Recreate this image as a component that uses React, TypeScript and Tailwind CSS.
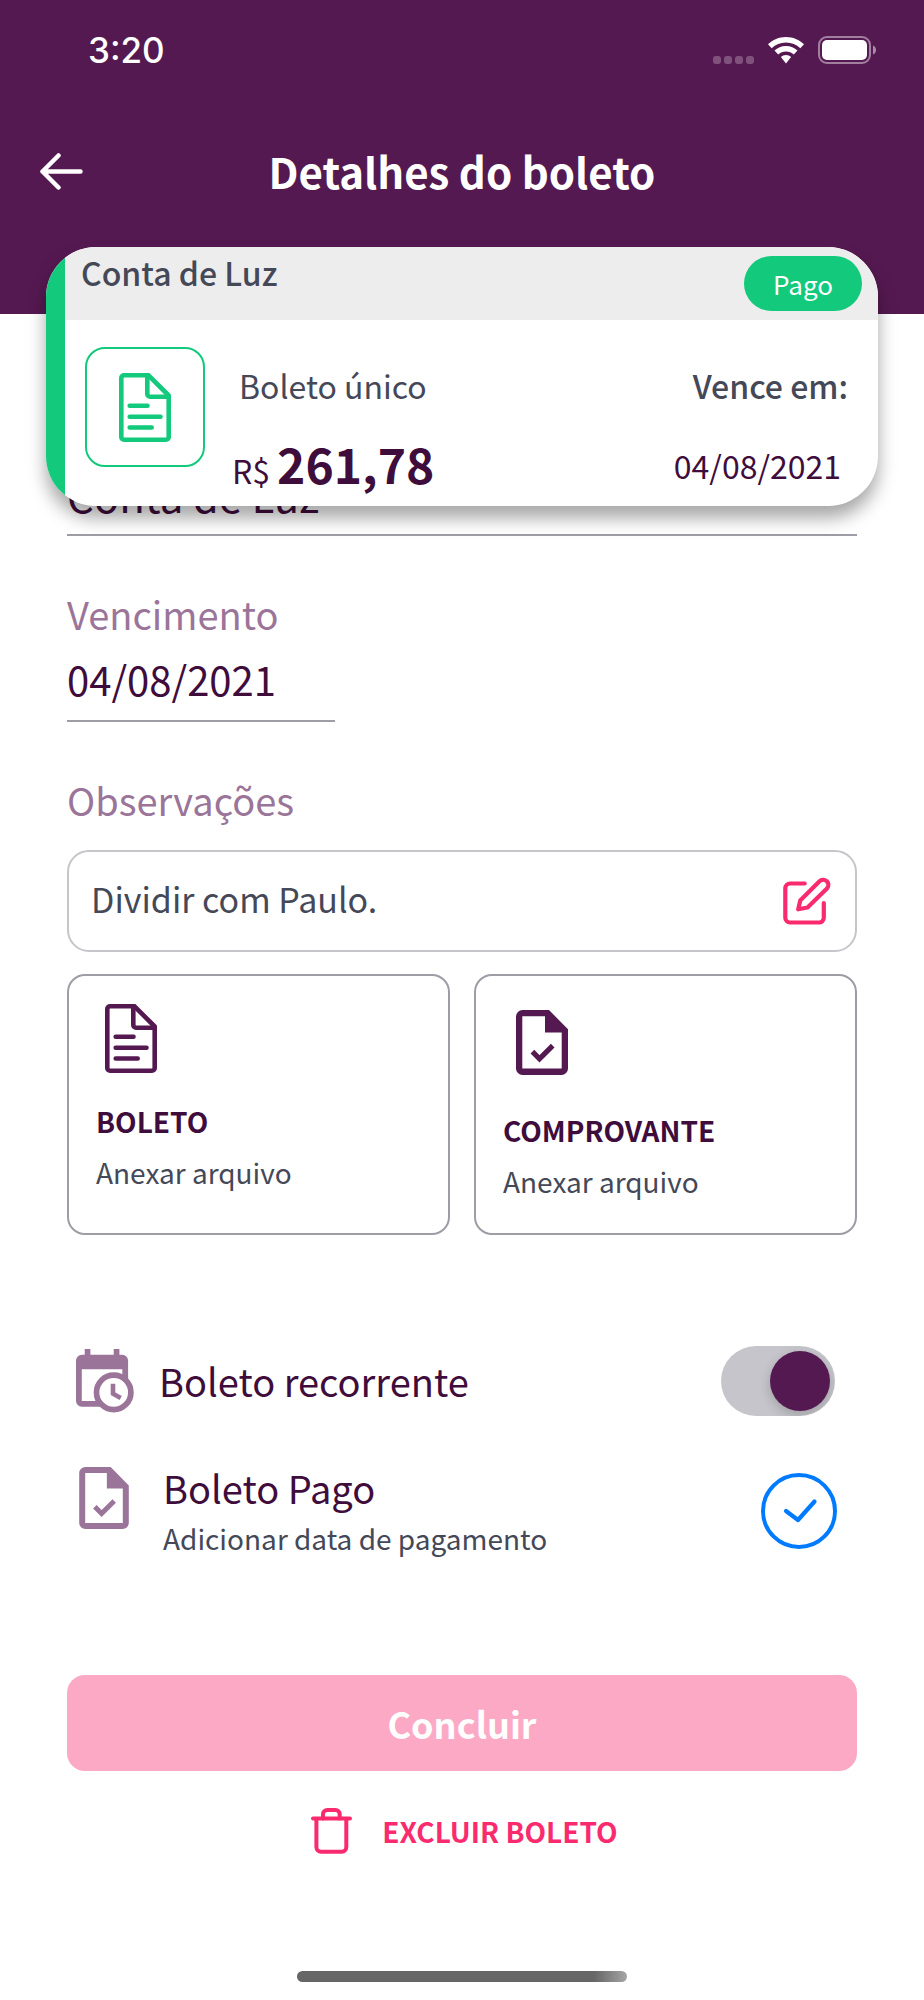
import { useState, type ReactNode } from "react";

function WifiIcon() {
  return (
    <svg width="36" height="27" viewBox="0 0 36 27" fill="#ffffff">
      <path d="M18 0C11 0 4.700 2.800 0 7.300L3.700 11.200C7.400 7.500 12.400 5.400 18 5.400S28.600 7.500 32.300 11.200L36 7.300C31.300 2.800 25 0 18 0Z" />
      <path d="M18 9C13.500 9 9.500 10.700 6.500 13.600L10.200 17.500C12.300 15.500 15 14.400 18 14.400S23.700 15.500 25.800 17.500L29.500 13.600C26.500 10.700 22.500 9 18 9Z" />
      <path d="M18 18C16 18 14.200 18.700 12.900 20L18 26.500L23.100 20C21.800 18.700 20 18 18 18Z" />
    </svg>
  );
}

function BatteryIcon() {
  return (
    <svg width="58" height="28" viewBox="0 0 58 28" fill="none">
      <rect x="1" y="1" width="51" height="26" rx="8" stroke="#ffffff" strokeOpacity="0.45" strokeWidth="2" />
      <rect x="4" y="4" width="45" height="20" rx="5" fill="#ffffff" />
      <path d="M55 9.500C57 10 58 12 58 14S57 18 55 18.500Z" fill="#ffffff" fillOpacity="0.5" />
    </svg>
  );
}

function ArrowLeftIcon() {
  return (
    <svg width="43" height="37" viewBox="0 0 43 37" fill="none" stroke="#ffffff" strokeWidth="4.500" strokeLinecap="round" strokeLinejoin="round">
      <path d="M40.500 18.500H2.500M18.500 2.500L2.500 18.500L18.500 34.500" />
    </svg>
  );
}

function FileTextIcon() {
  return (
    <svg width="52" height="69" viewBox="0 0 52 69" fill="none" stroke="currentColor" strokeWidth="4.600" strokeLinecap="round" strokeLinejoin="round">
      <path d="M28.300 2.300H5A2.700 2.700 0 0 0 2.300 5V64A2.700 2.700 0 0 0 5 66.700H47A2.700 2.700 0 0 0 49.700 64V22.500L29.500 2.300" />
      <path d="M28.300 2.300V21A2.700 2.700 0 0 0 31 23.700H49.500" />
      <path d="M10.700 32.800H28.500M10.700 43.700H41.500M10.700 54.500H32.700" />
    </svg>
  );
}

function FileCheckIcon({ className }: { className?: string }) {
  return (
    <svg className={className} viewBox="0 0 52 65" fill="currentColor">
      <path
        fillRule="evenodd"
        d="M6.500 0H33L52 19.300V58.500A6.500 6.500 0 0 1 45.500 65H6.500A6.500 6.500 0 0 1 0 58.500V6.500A6.500 6.500 0 0 1 6.500 0ZM6.300 6.300V58.600H45.700V22.500H29V6.300Z"
      />
      <path d="M16.400 41.700L23.500 48.800L36.700 35.700" fill="none" stroke="currentColor" strokeWidth="5.200" />
    </svg>
  );
}

function CalendarClockIcon() {
  return (
    <svg width="58" height="64" viewBox="0 0 58 64" fill="currentColor">
      <path
        fillRule="evenodd"
        d="M8.700 0H14.400V5.800H37.700V0H43.400V5.800H46.300A5.800 5.800 0 0 1 52.100 11.600V52A5.800 5.800 0 0 1 46.300 57.800H5.800A5.800 5.800 0 0 1 0 52V11.600A5.800 5.800 0 0 1 5.800 5.800H8.700ZM5.800 20.200V52H46.300V20.200Z"
      />
      <circle cx="37.700" cy="43.400" r="17.200" fill="#ffffff" stroke="currentColor" strokeWidth="5.700" />
      <path d="M37 34.700V44.700L44.700 49" fill="none" stroke="currentColor" strokeWidth="4.600" />
    </svg>
  );
}

function EditIcon() {
  return (
    <svg width="48" height="48" viewBox="0 0 48 48" fill="none" stroke="currentColor" strokeWidth="4.200" strokeLinecap="round" strokeLinejoin="round">
      <path d="M21.700 6.500H7A4.700 4.700 0 0 0 2.300 11.200V40.800A4.700 4.700 0 0 0 7 45.500H36A4.700 4.700 0 0 0 40.800 40.800V26" />
      <path d="M15.200 32.300L17.200 23.600L37 3.800A5.200 5.200 0 0 1 44.200 11.200L24.500 30.500Z" />
    </svg>
  );
}

function TrashIcon() {
  return (
    <svg width="41" height="46" viewBox="0 0 41 46" fill="none" stroke="currentColor" strokeWidth="4" strokeLinecap="round" strokeLinejoin="round">
      <path d="M2 10.400H39M5.400 10.400V39A4.700 4.700 0 0 0 10 43.700H30.700A4.700 4.700 0 0 0 35.300 39V10.400" />
      <path d="M12 10.400V6.300A4.300 4.300 0 0 1 16.300 2H24.400A4.300 4.300 0 0 1 28.700 6.300V10.400" />
    </svg>
  );
}

interface AttachButtonProps {
  title: string;
  className: string;
  children: ReactNode;
}

function AttachButton({ title, className, children }: AttachButtonProps) {
  return (
    <button
      type="button"
      className={`flex h-[261px] flex-col items-start rounded-[18px] border-2 border-[#9e9da6] px-[27px] text-left text-[28px] leading-10 ${className}`}
    >
      {children}
      <span className="flex flex-col gap-[11px]">
        <strong className="font-bold text-[#3f0d3c]">{title}</strong>
        <span className="text-[#444857]">Anexar arquivo</span>
      </span>
    </button>
  );
}

export default function App() {
  const [name, setName] = useState("Conta de Luz");
  const [dueDate, setDueDate] = useState("04/08/2021");
  const [notes, setNotes] = useState("Dividir com Paulo.");
  const [recurring, setRecurring] = useState(true);
  const [paid, setPaid] = useState(true);

  return (
    <div className="flex min-h-screen flex-col bg-white font-['Noto_Sans_CJK_JP',sans-serif]">
      <header className="bg-[#551951] pb-[72px] text-white">
        {/* Status bar */}
        <div className="flex h-[100px] items-center justify-between pr-12 pl-[88px]">
          <span className="font-['Inter',sans-serif] text-[35px] leading-10 font-medium">3:20</span>
          <div className="flex items-center gap-[14px]">
            <div className="flex gap-[3px] pt-5">
              <span className="size-2 rounded-[3px] bg-white/25" />
              <span className="size-2 rounded-[3px] bg-white/25" />
              <span className="size-2 rounded-[3px] bg-white/25" />
              <span className="size-2 rounded-[3px] bg-white/25" />
            </div>
            <WifiIcon />
            <BatteryIcon />
          </div>
        </div>

        {/* Title */}
        <div className="grid h-[142px] grid-cols-[1fr_auto_1fr] items-center px-10">
          <button type="button" aria-label="Voltar" className="justify-self-start">
            <ArrowLeftIcon />
          </button>
          <h1 className="text-[42px] leading-[56px] font-bold">Detalhes do boleto</h1>
        </div>
      </header>

      {/* Summary card */}
      <section className="relative z-10 mx-[46px] -mt-[67px] flex overflow-hidden rounded-[50px] bg-white shadow-[0_12px_18px_rgba(0,0,0,0.35)]">
        <div className="w-[19px] bg-[#12c97c]" />
        <div className="flex-1">
          <div className="flex h-[73px] items-center justify-between bg-[#ededed] px-4">
            <h2 className="self-start text-[32px] leading-[50px] font-medium text-[#444857]">Conta de Luz</h2>
            <span className="flex h-[55px] w-[118px] items-center justify-center rounded-full bg-[#12c97c] text-[26px] text-white">
              Pago
            </span>
          </div>
          <div className="flex h-[186px] items-start pt-[27px] pr-[30px] pl-5 text-[32px] leading-12">
            <div className="flex size-[120px] items-center justify-center rounded-[20px] border-2 border-[#12c97c] text-[#12c97c]">
              <FileTextIcon />
            </div>
            <div className="flex flex-col gap-[26px] pt-[14px] pl-[27px]">
              <span className="pl-[7px] text-[#444857]">Boleto único</span>
              <span className="flex items-baseline gap-[7px] leading-14 text-[#3f0d3c]">
                R$ <strong className="text-[48px] font-bold">261,78</strong>
              </span>
            </div>
            <div className="ml-auto flex flex-col items-end gap-8 pt-[14px]">
              <span className="font-medium text-[#444857]">Vence em:</span>
              <span className="pr-[7px] text-[#3f0d3c]">04/08/2021</span>
            </div>
          </div>
        </div>
      </section>

      <main className="-mt-9 flex flex-col px-[67px]">
        <input
          aria-label="Nome do boleto"
          value={name}
          onChange={(e) => setName(e.target.value)}
          className="h-[66px] w-full border-b-2 border-[#9e9da6] pb-4 text-[42px] leading-12 text-[#3f0d3c] outline-none"
        />

        <label htmlFor="due-date" className="mt-[54px] text-[38px] leading-12 text-[#9b7599]">
          Vencimento
        </label>
        <input
          id="due-date"
          value={dueDate}
          onChange={(e) => setDueDate(e.target.value)}
          className="mt-[18px] h-[66px] w-[268px] border-b-2 border-[#9e9da6] pb-[18px] text-[40px] leading-12 text-[#3f0d3c] outline-none"
        />

        <label htmlFor="notes" className="mt-[54px] text-[38px] leading-12 text-[#9b7599]">
          Observações
        </label>
        <div className="mt-[26px] flex h-[102px] items-center rounded-[22px] border-2 border-[#c6c6ca] pr-6 pl-[22px]">
          <input
            id="notes"
            value={notes}
            onChange={(e) => setNotes(e.target.value)}
            className="h-12 min-w-0 flex-1 pb-1 text-[34px] leading-12 text-[#444857] outline-none"
          />
          <button type="button" aria-label="Editar observações" className="text-[#fa2a6f]">
            <EditIcon />
          </button>
        </div>

        <div className="mt-[22px] grid grid-cols-2 gap-6">
          <AttachButton title="BOLETO" className="gap-7 pt-7">
            <span className="pl-[9px] text-[#551951]">
              <FileTextIcon />
            </span>
          </AttachButton>
          <AttachButton title="COMPROVANTE" className="gap-[35px] pt-[34px]">
            <span className="pl-[13px] text-[#551951]">
              <FileCheckIcon className="h-[65px] w-[52px]" />
            </span>
          </AttachButton>
        </div>

        {/* Options */}
        <div className="mt-[111px] flex items-center pr-[22px] pl-[9px]">
          <span className="text-[#9b7599]">
            <CalendarClockIcon />
          </span>
          <label htmlFor="recurring" className="pl-[25px] text-[38px] leading-12 text-[#3f0d3c]">
            Boleto recorrente
          </label>
          <input
            id="recurring"
            type="checkbox"
            role="switch"
            checked={recurring}
            onChange={(e) => setRecurring(e.target.checked)}
            className="ml-auto flex h-[70px] w-[114px] appearance-none items-center overflow-hidden rounded-full bg-[#c6c5cb] px-[5px] before:size-[60px] before:rounded-full before:bg-[#551951] before:shadow-[0_4px_12px_rgba(0,0,0,0.2)] before:content-[''] checked:justify-end"
          />
        </div>

        <div className="mt-12 flex items-center pr-5 pl-3">
          <span className="self-start pt-[3px] text-[#9b7599]">
            <FileCheckIcon className="h-[62px] w-[50px]" />
          </span>
          <label htmlFor="paid" className="flex flex-col gap-[6px] pl-[34px]">
            <span className="text-[38px] leading-12 text-[#3f0d3c]">Boleto Pago</span>
            <span className="text-[28px] leading-10 text-[#444857]">Adicionar data de pagamento</span>
          </label>
          <div className="relative ml-auto size-[76px]">
            <input
              id="paid"
              type="checkbox"
              checked={paid}
              onChange={(e) => setPaid(e.target.checked)}
              className="peer block size-full appearance-none rounded-full border-4 border-[#007bff]"
            />
            <svg
              className="pointer-events-none absolute inset-0 hidden peer-checked:block"
              viewBox="0 0 76 76"
              fill="none"
              stroke="#007bff"
              strokeWidth="4.200"
              strokeLinecap="round"
              strokeLinejoin="round"
            >
              <path d="M25 38L37 47L53.500 28.500" />
            </svg>
          </div>
        </div>

        {/* Actions */}
        <button
          type="button"
          className="mt-[117px] h-24 rounded-[18px] bg-[#fba9c5] text-[36px] leading-12 font-bold text-white"
        >
          Concluir
        </button>
        <button
          type="button"
          className="mt-9 flex h-12 items-center gap-[30px] self-center pl-[5px] text-[28px] leading-10 font-bold text-[#fa2a6f]"
        >
          <TrashIcon />
          EXCLUIR BOLETO
        </button>
      </main>

      {/* Home indicator */}
      <div className="mx-auto mt-auto mb-[18px] h-[11px] w-[330px] rounded-full bg-linear-to-r from-[#666666] from-90% to-[#a6a6a6]" />
    </div>
  );
}
